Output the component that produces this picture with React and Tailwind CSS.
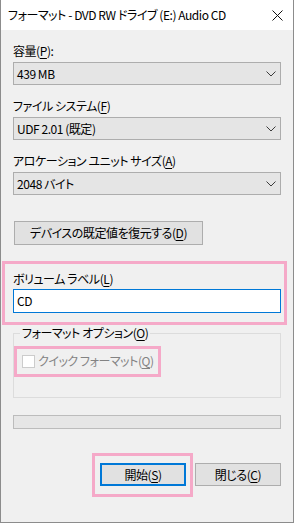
import React from 'react';

const FONT = "font-['Yu_Gothic_UI','Noto_Sans_CJK_JP',sans-serif] [font-feature-settings:'palt'] tracking-[-0.45px]";

function Chevron() {
  return (
    <svg width="10" height="6" viewBox="0 0 10 6" className="shrink-0">
      <polyline points="0.5,0.5 5,5 9.5,0.5" fill="none" stroke="#3c3c3c" strokeWidth="1" />
    </svg>
  );
}

function Combo({ value }) {
  return (
    <div className="flex h-[23px] items-center justify-between border border-[#adadad] bg-[#e5e5e5] pl-[3px] pr-[4px]">
      <span className="text-[12px] leading-4 text-black">{value}</span>
      <Chevron />
    </div>
  );
}

function Label({ children, className = '' }) {
  return <div className={`h-4 text-[12px] leading-4 text-black ${className}`}>{children}</div>;
}

function Pink({ className }) {
  return <div className={`pointer-events-none absolute border-[3px] border-[#f5a9c8] ${className}`} />;
}

function Key({ children }) {
  return <span className="underline underline-offset-2">{children}</span>;
}

export default function App() {
  return (
    <div className={`flex h-[523px] w-[294px] flex-col border-x border-b border-[#8c8c8c] bg-[#f0f0f0] ${FONT}`}>
      <div className="flex h-[30px] shrink-0 items-center justify-between bg-white pl-[7px] pr-[10px]">
        <span className="text-[12px] leading-4 text-black">フォーマット - DVD RW ドライブ (E:) Audio CD</span>
        <svg width="11" height="11" viewBox="0 0 11 11">
          <path d="M0.5 0.5L10.5 10.5M10.5 0.5L0.5 10.5" stroke="#111" strokeWidth="1" />
        </svg>
      </div>

      <div className="flex flex-col px-3 pt-[13px]">
        <Label className="mb-[3px]">
          容量(<Key>P</Key>):
        </Label>
        <Combo value="439 MB" />

        <Label className="mb-[3px] mt-[13px]">
          ファイル システム(<Key>F</Key>)
        </Label>
        <Combo value="UDF 2.01 (既定)" />

        <Label className="mb-[3px] mt-[13px]">
          アロケーション ユニット サイズ(<Key>A</Key>)
        </Label>
        <Combo value="2048 バイト" />

        <button
          type="button"
          className="ml-px mt-[26px] flex h-[24px] w-[189px] items-center justify-center border border-[#adadad] bg-[#e1e1e1] text-[12px] leading-4 text-black"
        >
          デバイスの既定値を復元する(<Key>D</Key>)
        </button>

        <div className="relative mt-[26px]">
          <Label className="mb-[2px]">
            ボリューム ラベル(<Key>L</Key>)
          </Label>
          <div className="flex h-[24px] items-center border border-[#0078d7] bg-white pl-[3px] text-[12px] leading-4 text-black">
            CD
          </div>
          <Pink className="-left-[11px] -right-[6px] -top-[10px] -bottom-[12px]" />
        </div>

        <div className="relative mt-[20px] h-[65px] border border-[#dcdcdc]">
          <div className="absolute -top-[9px] left-[6px] bg-[#f0f0f0] px-[2px] text-[12px] leading-4 text-black">
            フォーマット オプション(<Key>O</Key>)
          </div>
          <div className="relative ml-[8px] mt-[19px] flex w-fit items-center gap-[3px]">
            <div className="h-[13px] w-[13px] border border-[#cccccc] bg-white" />
            <span className="text-[12px] leading-4 text-[#838383]">
              クイック フォーマット(<Key>Q</Key>)
            </span>
            <Pink className="-left-[8px] -right-[7px] -top-[7px] -bottom-[8px]" />
          </div>
        </div>

        <div className="mt-[17px] h-[14px] border border-[#bcbcbc] bg-[#e6e6e6]" />

        <div className="mt-[34px] flex justify-end gap-[9px]">
          <div className="relative">
            <button
              type="button"
              className="flex h-[23px] w-[86px] items-center justify-center border-2 border-[#0078d7] bg-[#e1e1e1] text-[12px] leading-4 text-black"
            >
              開始(<Key>S</Key>)
            </button>
            <Pink className="-left-[8px] -right-[7px] -top-[10px] -bottom-[11px]" />
          </div>
          <button
            type="button"
            className="flex h-[23px] w-[86px] items-center justify-center border border-[#adadad] bg-[#e1e1e1] text-[12px] leading-4 text-black"
          >
            閉じる(<Key>C</Key>)
          </button>
        </div>
      </div>
    </div>
  );
}
